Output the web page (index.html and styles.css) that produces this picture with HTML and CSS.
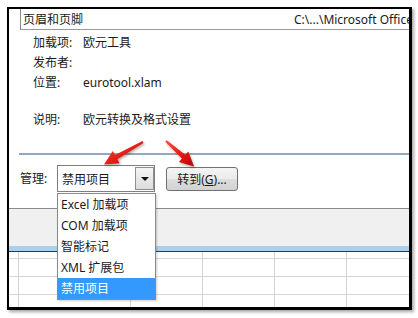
FILE: index.html
```html
<!DOCTYPE html>
<html lang="zh-CN">
<head>
<meta charset="utf-8">
<title>加载项</title>
<link rel="stylesheet" href="styles.css">
</head>
<body>
<div class="frame">
  <div class="listrow">
    <span class="list-name">页眉和页脚</span>
    <span class="list-path">C:\...\Microsoft Office\Office14\Library</span>
  </div>

  <div class="info">
    <div class="info-label">加载项:</div><div class="info-value">欧元工具</div>
    <div class="info-label">发布者:</div><div class="info-value"></div>
    <div class="info-label">位置:</div><div class="info-value">eurotool.xlam</div>
  </div>
  <div class="info info-desc">
    <div class="info-label">说明:</div><div class="info-value">欧元转换及格式设置</div>
  </div>

  <div class="separator"></div>

  <div class="manage">
    <span class="manage-label">管理:</span>
    <div class="combo">
      <span class="combo-text">禁用项目</span>
      <span class="combo-btn"><span class="combo-arrow"></span></span>
    </div>
    <button class="goto">转到(<u>G</u>)...</button>
  </div>

  <div class="dialog-foot"></div>
  <div class="sheet-band"></div>
  <div class="sheet-grid"></div>

  <ul class="droplist">
    <li>Excel 加载项</li>
    <li>COM 加载项</li>
    <li>智能标记</li>
    <li>XML 扩展包</li>
    <li class="selected">禁用项目</li>
  </ul>
</div>

<svg class="arrows" width="418" height="318" viewBox="0 0 418 318">
  <defs>
    <linearGradient id="red" x1="0" y1="0" x2="1" y2="1">
      <stop offset="0" stop-color="#ff4a3a"/>
      <stop offset="0.6" stop-color="#e01812"/>
      <stop offset="1" stop-color="#b00808"/>
    </linearGradient>
    <filter id="sh" x="-20%" y="-20%" width="140%" height="140%">
      <feDropShadow dx="1" dy="1.5" stdDeviation="1" flood-color="#000" flood-opacity="0.35"/>
    </filter>
  </defs>
  <polygon filter="url(#sh)" fill="url(#red)" points="142.5,141.1 115.0,154.9 112.8,151.0 104,164.5 119.6,163.2 117.4,159.3 143.5,142.9"/>
  <polygon filter="url(#sh)" fill="url(#red)" points="166.7,140.25 185.3,154.8 188.3,151.5 194,166.5 178.9,161.9 181.9,158.6 165.3,141.75"/>
</svg>
</body>
</html>
```

FILE: styles.css
```css
html, body {
  margin: 0;
  padding: 0;
  background: #ffffff;
}

body {
  width: 418px;
  height: 318px;
  overflow: hidden;
  position: relative;
  font-family: "Noto Sans", "Noto Sans CJK SC", sans-serif;
  font-size: 12px;
  color: #1a1a1a;
}

.frame {
  position: relative;
  margin: 7px 0 0 7px;
  width: 400px;
  height: 298px;
  border-style: solid;
  border-color: #000;
  border-width: 2px 3px 3px 2px;
  background: #fff;
  overflow: hidden;
  box-shadow: 2px 2px 3px rgba(0, 0, 0, 0.35);
  display: flex;
  flex-direction: column;
}

/* list box bottom row */
.listrow {
  margin-left: 11px;
  height: 20px;
  border-left: 1px solid #8c8c8c;
  border-bottom: 1px solid #9a9a9a;
  display: flex;
  align-items: center;
  padding-left: 2px;
  white-space: nowrap;
  flex-shrink: 0;
}

.list-name {
  width: 271px;
  flex-shrink: 0;
}

.list-path {
  flex-shrink: 0;
}

/* details */
.info {
  display: grid;
  grid-template-columns: 50px auto;
  grid-auto-rows: 20px;
  align-items: center;
  padding-left: 24px;
  margin-top: 2px;
  flex-shrink: 0;
}

.info-desc {
  margin-top: 17px;
}

.separator {
  margin: 24px 0 0 10px;
  height: 2px;
  background: #93a8bf;
  flex-shrink: 0;
}

/* manage row */
.manage {
  margin: 10px 0 0 11px;
  display: flex;
  align-items: flex-start;
  height: 27px;
  flex-shrink: 0;
}

.manage-label {
  width: 37px;
  line-height: 27px;
}

.combo {
  box-sizing: border-box;
  width: 98px;
  height: 27px;
  border: 1px solid #7f7f7f;
  background: #fff;
  display: flex;
  align-items: center;
  justify-content: space-between;
  padding: 1px 0 1px 4px;
}

.combo-btn {
  box-sizing: border-box;
  width: 19px;
  height: 23px;
  border: 1px solid #8e8e8e;
  background: linear-gradient(#f4f4f4, #dcdcdc);
  display: flex;
  align-items: center;
  justify-content: center;
}

.combo-arrow {
  width: 0;
  height: 0;
  border-left: 4px solid transparent;
  border-right: 4px solid transparent;
  border-top: 4px solid #111;
}

.goto {
  box-sizing: border-box;
  margin: 2px 0 0 11px;
  width: 72px;
  height: 24px;
  border: 1px solid #707070;
  border-radius: 3px;
  background: linear-gradient(#f4f4f4 0%, #ebebeb 50%, #dddddd 51%, #d2d2d2 100%);
  font-family: "Noto Sans", "Noto Sans CJK SC", sans-serif;
  font-size: 12px;
  color: #1a1a1a;
  padding: 0;
  text-align: center;
}

/* dialog bottom & sheet */
.dialog-foot {
  margin-top: 16px;
  height: 37px;
  border-top: 1px solid #8a8a8a;
  background: #f0f0f0;
  flex-shrink: 0;
}

.sheet-band {
  height: 5px;
  background: #a9d0ee;
  border-bottom: 1px solid #2e3a48;
  flex-shrink: 0;
}

.sheet-grid {
  flex: 1;
  background-color: #fff;
  background-image:
    repeating-linear-gradient(to bottom, transparent 0 17px, #d6d6d6 17px 18px),
    repeating-linear-gradient(to right, transparent 0 71px, #d2d2d2 71px 72px);
  background-position: 0 -11px, 50px 0;
}

/* dropdown list overlay */
.droplist {
  position: absolute;
  left: 48px;
  top: 184px;
  box-sizing: border-box;
  width: 99px;
  margin: 0;
  padding: 0;
  list-style: none;
  border: 1px solid #8a8a8a;
  background: #fff;
  box-shadow: 1px 1px 2px rgba(0, 0, 0, 0.2);
}

.droplist li {
  height: 21px;
  line-height: 21px;
  padding-left: 3px;
  white-space: nowrap;
}

.droplist li.selected {
  background: #3399ff;
  color: #fff;
}

.arrows {
  position: absolute;
  left: 0;
  top: 0;
  pointer-events: none;
}
```
